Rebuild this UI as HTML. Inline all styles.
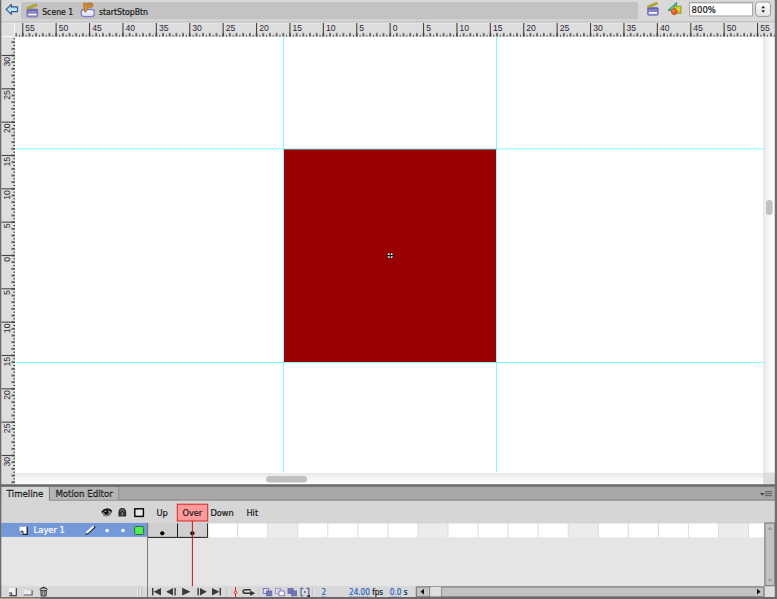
<!DOCTYPE html>
<html lang="en">
<head>
<meta charset="utf-8">
<title>startStopBtn</title>
<style>
html,body{margin:0;padding:0;background:#d6d6d6;overflow:hidden}
body{width:777px;height:599px;position:relative;font-family:"DejaVu Sans Condensed","Liberation Sans",sans-serif}
svg{position:absolute;left:0;top:0;display:block}
.mj{stroke:#454545;stroke-width:1.1}
.rl{font-family:"Liberation Sans",sans-serif;font-size:8.6px;fill:#2b2633}
.ui{font-family:"DejaVu Sans Condensed","Liberation Sans",sans-serif;font-size:8.6px;fill:#1a1a1a;stroke:#1a1a1a;stroke-width:0.22px}
.tb{font-family:"DejaVu Sans","Liberation Sans",sans-serif;font-size:8.6px;fill:#111;stroke:#111;stroke-width:0.4px}
</style>
</head>
<body>
<svg width="777" height="599" viewBox="0 0 777 599">
<defs>
  <pattern id="ht" x="2.710" y="22.8" width="6.68" height="20" patternUnits="userSpaceOnUse">
    <rect x="-0.575" y="10.3" width="1.15" height="3.5" fill="#111"/>
    <rect x="6.105" y="10.3" width="1.15" height="3.5" fill="#111"/>
    <rect x="2.89" y="12.2" width="0.9" height="1.6" fill="#161616"/>
  </pattern>
  <pattern id="vt" x="0" y="2.154" width="20" height="6.667" patternUnits="userSpaceOnUse">
    <rect y="-0.575" x="10.5" height="1.15" width="3.5" fill="#111"/>
    <rect y="6.092" x="10.5" height="1.15" width="3.5" fill="#111"/>
    <rect y="2.883" x="12.4" height="0.9" width="1.6" fill="#161616"/>
  </pattern>
  <linearGradient id="hs" x1="0" y1="0" x2="0" y2="1"><stop offset="0" stop-color="#e6e6e6"/><stop offset="0.5" stop-color="#f7f7f7"/><stop offset="1" stop-color="#fdfdfd"/></linearGradient>
  <linearGradient id="vs" x1="0" y1="0" x2="1" y2="0"><stop offset="0" stop-color="#e6e6e6"/><stop offset="0.5" stop-color="#f7f7f7"/><stop offset="1" stop-color="#fdfdfd"/></linearGradient>
  <linearGradient id="dv" x1="0" y1="0" x2="0" y2="1"><stop offset="0" stop-color="#5a5a5a"/><stop offset="0.6" stop-color="#6c6c6c"/><stop offset="1" stop-color="#9a9a9a"/></linearGradient>
  <linearGradient id="stp" x1="0" y1="0" x2="0" y2="1"><stop offset="0" stop-color="#ffffff"/><stop offset="1" stop-color="#e2e2e2"/></linearGradient>
</defs>

<!-- top bar -->
<rect x="0" y="0" width="777" height="23" fill="#d9d9d9"/>
<rect x="0" y="21" width="777" height="1.9" fill="#c5c5c5"/>
<rect x="21" y="2" width="617" height="17.5" rx="1.9" fill="#c3c3c3"/>


<!-- back arrow -->
<defs>
 <linearGradient id="ar" x1="0" y1="0" x2="0" y2="1"><stop offset="0" stop-color="#7cc6f8"/><stop offset="0.6" stop-color="#bfeaff"/><stop offset="1" stop-color="#8ccff5"/></linearGradient>
 <linearGradient id="btn" x1="0" y1="0" x2="0" y2="1"><stop offset="0" stop-color="#ffffff"/><stop offset="1" stop-color="#d6d6f2"/></linearGradient>
 <linearGradient id="clp" x1="0" y1="0" x2="0" y2="1"><stop offset="0" stop-color="#5c5cb0"/><stop offset="1" stop-color="#9494d8"/></linearGradient>
</defs>
<path d="M6.1 9.3L11.4 4.3V6.9H17.5V11.6H11.4V14.3Z" fill="url(#ar)" stroke="#33568c" stroke-width="1.1" stroke-linejoin="round"/>
<g transform="translate(26.2 3.6)">
  <rect x="0.8" y="5.6" width="10.6" height="7.6" rx="0.8" fill="url(#clp)" stroke="#6a68b8" stroke-width="0.8"/>
  <rect x="2.2" y="7.6" width="2" height="0.9" fill="#b4b4e6"/><rect x="5.1" y="7.6" width="2" height="0.9" fill="#b4b4e6"/><rect x="8" y="7.6" width="2" height="0.9" fill="#b4b4e6"/>
  <rect x="2" y="10" width="8.2" height="1.7" fill="#ffffff"/>
  <path d="M0.4 4.2L10 0.1L10.9 2.1L1.2 6.1Z" fill="#b8ad1c" stroke="#8f8a18" stroke-width="0.5"/>
</g>
<text x="42.2" y="14.5" class="ui" style="font-size:8.65px">Scene 1</text>
<!-- button symbol icon -->
<rect x="81.3" y="9.5" width="13" height="7.1" rx="2.5" fill="url(#btn)" stroke="#7e7ec6" stroke-width="1.3"/>
<path d="M83.5 3.6C83.6 2.8 85.6 2.6 86 3.4L86.6 5.6L87 3.4C87.6 2.7 92.4 2.7 92.9 3.5C93.2 4.8 93.2 6 92.6 6.9C91.6 7.7 89 7.8 87.5 7.5L86.5 11.4C86 12.5 84.6 12.6 84.3 11.6Z" fill="#cf8c34" stroke="#9c621a" stroke-width="0.5"/>
<path d="M88.4 3.2V5.4M90 3.2V5.4M91.6 3.2V5.2M84.8 4V10.8" stroke="#a96c1e" stroke-width="0.5" fill="none"/>
<path d="M85.6 4V10.4" stroke="#e8b060" stroke-width="0.5" fill="none"/>
<text x="99" y="14.5" class="ui" style="font-size:8.65px">startStopBtn</text>
<!-- right icons -->
<g transform="translate(646.8 2)">
  <rect x="0.8" y="5.6" width="10.6" height="7.6" rx="0.8" fill="url(#clp)" stroke="#6a68b8" stroke-width="0.8"/>
  <rect x="2.2" y="7.6" width="2" height="0.9" fill="#b4b4e6"/><rect x="5.1" y="7.6" width="2" height="0.9" fill="#b4b4e6"/><rect x="8" y="7.6" width="2" height="0.9" fill="#b4b4e6"/>
  <rect x="2" y="10" width="8.2" height="1.7" fill="#ffffff"/>
  <path d="M0.4 4.2L10 0.1L10.9 2.1L1.2 6.1Z" fill="#b8ad1c" stroke="#8f8a18" stroke-width="0.5"/>
</g>
<path d="M667.9 10.4L676.6 2.4V10.4Z" fill="#35c596" stroke="#1f8a6e" stroke-width="0.8" stroke-linejoin="round"/>
<path d="M670.8 9.5L675.7 5V9.5Z" fill="#66dcb2"/>
<rect x="674" y="6.2" width="7" height="7" fill="#c9c81c" stroke="#8f8f10" stroke-width="0.8"/>
<circle cx="674.3" cy="11.6" r="3.1" fill="#ea5522" stroke="#b8401a" stroke-width="0.5"/>
<circle cx="673.5" cy="10.8" r="1.5" fill="#ff8c5a" opacity="0.75"/>
<rect x="676.4" y="7.2" width="3.6" height="3.4" fill="#e2e046" opacity="0.7"/>
<!-- zoom box -->
<rect x="689.6" y="2.4" width="63" height="13.6" fill="#ffffff" stroke="#a2a2a2" stroke-width="1"/>
<rect x="690.1" y="2.9" width="62" height="1" fill="#d8d8d8"/>
<text x="691.6" y="12.9" class="ui" style="font-family:'DejaVu Sans','Liberation Sans',sans-serif;font-size:8.5px">800%</text>
<rect x="755.6" y="2.1" width="15" height="14.3" rx="3" fill="url(#stp)" stroke="#9a9a9a" stroke-width="1"/>
<path d="M761.3 8.3h3.8l-1.9-2.5zM761.3 10.2h3.8l-1.9 2.5z" fill="#222"/>

<!-- rulers -->
<rect x="1" y="22.8" width="774" height="13.6" fill="#dedede"/>
<rect x="1" y="22.8" width="774" height="0.7" fill="#e8e8e8"/>
<rect x="1" y="36.4" width="14" height="448" fill="#dedede"/>
<rect x="1" y="36.2" width="14" height="0.9" fill="#fafafa"/>
<rect x="14.1" y="22.8" width="0.9" height="14" fill="#fafafa"/>

<!-- stage -->
<rect x="15" y="36.8" width="748" height="436.4" fill="#ffffff"/>
<rect x="15.3" y="22.8" width="759.7" height="14" fill="url(#ht)" transform="translate(0 0)"/>
<g transform="translate(1 0)"><rect x="0" y="37.6" width="14" height="446" fill="url(#vt)"/></g>
<line x1="22.75" y1="23" x2="22.75" y2="36.6" class="mj"/>
<text x="25.35" y="30.8" class="rl">55</text>
<line x1="56.15" y1="23" x2="56.15" y2="36.6" class="mj"/>
<text x="58.75" y="30.8" class="rl">50</text>
<line x1="89.55" y1="23" x2="89.55" y2="36.6" class="mj"/>
<text x="92.15" y="30.8" class="rl">45</text>
<line x1="122.95" y1="23" x2="122.95" y2="36.6" class="mj"/>
<text x="125.55" y="30.8" class="rl">40</text>
<line x1="156.35" y1="23" x2="156.35" y2="36.6" class="mj"/>
<text x="158.95" y="30.8" class="rl">35</text>
<line x1="189.75" y1="23" x2="189.75" y2="36.6" class="mj"/>
<text x="192.35" y="30.8" class="rl">30</text>
<line x1="223.15" y1="23" x2="223.15" y2="36.6" class="mj"/>
<text x="225.75" y="30.8" class="rl">25</text>
<line x1="256.55" y1="23" x2="256.55" y2="36.6" class="mj"/>
<text x="259.15" y="30.8" class="rl">20</text>
<line x1="289.95" y1="23" x2="289.95" y2="36.6" class="mj"/>
<text x="292.55" y="30.8" class="rl">15</text>
<line x1="323.35" y1="23" x2="323.35" y2="36.6" class="mj"/>
<text x="325.95" y="30.8" class="rl">10</text>
<line x1="356.75" y1="23" x2="356.75" y2="36.6" class="mj"/>
<text x="359.35" y="30.8" class="rl">5</text>
<line x1="390.15" y1="23" x2="390.15" y2="36.6" class="mj"/>
<text x="392.75" y="30.8" class="rl">0</text>
<line x1="423.55" y1="23" x2="423.55" y2="36.6" class="mj"/>
<text x="426.15" y="30.8" class="rl">5</text>
<line x1="456.95" y1="23" x2="456.95" y2="36.6" class="mj"/>
<text x="459.55" y="30.8" class="rl">10</text>
<line x1="490.35" y1="23" x2="490.35" y2="36.6" class="mj"/>
<text x="492.95" y="30.8" class="rl">15</text>
<line x1="523.75" y1="23" x2="523.75" y2="36.6" class="mj"/>
<text x="526.35" y="30.8" class="rl">20</text>
<line x1="557.15" y1="23" x2="557.15" y2="36.6" class="mj"/>
<text x="559.75" y="30.8" class="rl">25</text>
<line x1="590.55" y1="23" x2="590.55" y2="36.6" class="mj"/>
<text x="593.15" y="30.8" class="rl">30</text>
<line x1="623.95" y1="23" x2="623.95" y2="36.6" class="mj"/>
<text x="626.55" y="30.8" class="rl">35</text>
<line x1="657.35" y1="23" x2="657.35" y2="36.6" class="mj"/>
<text x="659.95" y="30.8" class="rl">40</text>
<line x1="690.75" y1="23" x2="690.75" y2="36.6" class="mj"/>
<text x="693.35" y="30.8" class="rl">45</text>
<line x1="724.15" y1="23" x2="724.15" y2="36.6" class="mj"/>
<text x="726.75" y="30.8" class="rl">50</text>
<line x1="757.55" y1="23" x2="757.55" y2="36.6" class="mj"/>
<text x="760.15" y="30.8" class="rl">55</text>
<line x1="1.5" y1="55.49" x2="15" y2="55.49" class="mj"/>
<text transform="translate(9.8 56.89) rotate(-90)" text-anchor="end" class="rl">30</text>
<line x1="1.5" y1="88.83" x2="15" y2="88.83" class="mj"/>
<text transform="translate(9.8 90.23) rotate(-90)" text-anchor="end" class="rl">25</text>
<line x1="1.5" y1="122.16" x2="15" y2="122.16" class="mj"/>
<text transform="translate(9.8 123.56) rotate(-90)" text-anchor="end" class="rl">20</text>
<line x1="1.5" y1="155.50" x2="15" y2="155.50" class="mj"/>
<text transform="translate(9.8 156.90) rotate(-90)" text-anchor="end" class="rl">15</text>
<line x1="1.5" y1="188.83" x2="15" y2="188.83" class="mj"/>
<text transform="translate(9.8 190.23) rotate(-90)" text-anchor="end" class="rl">10</text>
<line x1="1.5" y1="222.16" x2="15" y2="222.16" class="mj"/>
<text transform="translate(9.8 223.56) rotate(-90)" text-anchor="end" class="rl">5</text>
<line x1="1.5" y1="255.50" x2="15" y2="255.50" class="mj"/>
<text transform="translate(9.8 256.90) rotate(-90)" text-anchor="end" class="rl">0</text>
<line x1="1.5" y1="288.83" x2="15" y2="288.83" class="mj"/>
<text transform="translate(9.8 290.23) rotate(-90)" text-anchor="end" class="rl">5</text>
<line x1="1.5" y1="322.17" x2="15" y2="322.17" class="mj"/>
<text transform="translate(9.8 323.57) rotate(-90)" text-anchor="end" class="rl">10</text>
<line x1="1.5" y1="355.50" x2="15" y2="355.50" class="mj"/>
<text transform="translate(9.8 356.90) rotate(-90)" text-anchor="end" class="rl">15</text>
<line x1="1.5" y1="388.84" x2="15" y2="388.84" class="mj"/>
<text transform="translate(9.8 390.24) rotate(-90)" text-anchor="end" class="rl">20</text>
<line x1="1.5" y1="422.17" x2="15" y2="422.17" class="mj"/>
<text transform="translate(9.8 423.57) rotate(-90)" text-anchor="end" class="rl">25</text>
<line x1="1.5" y1="455.51" x2="15" y2="455.51" class="mj"/>
<text transform="translate(9.8 456.91) rotate(-90)" text-anchor="end" class="rl">30</text>

<!-- red square + guides -->
<rect x="283.5" y="149" width="213.2" height="213.4" fill="#990000"/>
<rect x="283" y="36.8" width="1" height="435.4" fill="#7ffaff"/>
<rect x="496" y="36.8" width="1" height="435.4" fill="#7ffaff"/>
<rect x="15" y="148.4" width="748" height="1" fill="#7ffaff"/>
<rect x="15" y="362" width="748" height="1" fill="#7ffaff"/>
<!-- registration point -->
<circle cx="390.2" cy="255.6" r="2.7" fill="#e8f4f4"/>
<path d="M386.4 255.6H394M390.2 251.8V259.4" stroke="#111" stroke-width="1.1" fill="none"/>

<!-- stage scrollbars -->
<rect x="15" y="473" width="748" height="11.6" fill="url(#hs)"/>
<rect x="763" y="36.8" width="11.8" height="436.4" fill="url(#vs)"/>
<rect x="763" y="472.6" width="11.8" height="12" fill="#dcdcdc"/>
<rect x="766" y="200" width="6.6" height="15" rx="3.3" fill="#c1c1c1"/>
<rect x="266.1" y="476.1" width="41" height="6.5" rx="3.25" fill="#c1c1c1"/>

<!-- divider + tab bar -->
<rect x="0" y="499" width="777" height="24" fill="#d6d6d6"/>
<rect x="0" y="486" width="777" height="14" fill="#a8a8a8"/>
<rect x="0" y="484.35" width="777" height="2.85" fill="url(#dv)"/>
<rect x="0" y="499.6" width="777" height="1" fill="#7e7e7e"/>
<rect x="1.3" y="487" width="47.7" height="14" fill="#d6d6d6"/>
<rect x="50" y="487.3" width="68.5" height="12.4" fill="#b4b4b4"/>
<rect x="48.9" y="487" width="1" height="13.4" fill="#7c7c7c"/>
<rect x="118.3" y="487" width="0.9" height="12.8" fill="#8a8a8a"/>
<text x="6.8" y="497.1" class="ui tb" style="text-shadow:0 0.8px 0 #ececec">Timeline</text>
<text x="55.4" y="497.1" class="ui tb" style="text-shadow:0 0.8px 0 #cfcfcf">Motion Editor</text>
<path d="M760 493h4.6l-2.3 2.8z" fill="#444"/>
<path d="M765 491.6h7M765 493.6h7M765 495.6h7" stroke="#6a6a6a" stroke-width="1.1"/>

<!-- timeline header row -->
<!-- layers area -->
<rect x="0" y="522.8" width="777" height="63.6" fill="#e5e5e5"/>
<rect x="1.2" y="522.9" width="146.1" height="14" fill="#7399d8"/>
<text x="33.6" y="533.2" class="ui" style="fill:#fff;stroke:#fff;font-size:9.3px">Layer 1</text>


<!-- header icons -->
<path d="M102 512.6C103.6 509.4 108.6 508 111.6 511.8C110 515.2 105 516.4 102 512.6Z" fill="#9a9a9a" stroke="#2a2a2a" stroke-width="0.8"/>
<path d="M102 512.2C104 509 109 508 111.6 511.4" fill="none" stroke="#151515" stroke-width="1.9"/>
<circle cx="106.4" cy="512.2" r="2.2" fill="#111"/>
<circle cx="105.6" cy="511.4" r="0.6" fill="#e0e0e0"/>
<path d="M103 515.2C106 516.6 109 516 110.8 514.2" fill="none" stroke="#555" stroke-width="0.7"/>
<path d="M118.4 516.4V512.4C118.4 506.6 126.2 506.6 126.2 512.4V516.4Z" fill="#2e2e2e"/>
<path d="M120.6 511.6C120.6 509 124 509 124 511.6" fill="none" stroke="#9a9a9a" stroke-width="0.9"/>
<rect x="121.4" y="512.4" width="1.8" height="3" fill="#7a7a7a"/>
<rect x="134.8" y="508.8" width="8.6" height="7.6" fill="#e6e6e6" stroke="#000" stroke-width="1.4"/>
<!-- layer row icons -->
<path d="M19.6 526.8H27.2V534.4H22.6L19.6 531.4Z" fill="#ffffff"/>
<path d="M27.2 526.8V534.4H22.6" fill="none" stroke="#1a1a1a" stroke-width="1.3"/>
<path d="M19.8 531.2H23V534.3Z" fill="#8a8a8a"/>
<path d="M20.4 531.2H23V534" fill="none" stroke="#2a2a2a" stroke-width="0.9"/>
<path d="M85.4 534.4L86.4 531.6L93.2 525.4L95 527.2L88.2 533.6Z" fill="#ffffff"/>
<path d="M85.4 534.4L88.2 533.6L95 527.2L94 526.2" fill="none" stroke="#222" stroke-width="1.1"/>
<circle cx="107.1" cy="530.5" r="1.7" fill="#fff"/>
<circle cx="123" cy="530.5" r="1.7" fill="#fff"/>
<rect x="134.6" y="526.5" width="9" height="8" rx="0.8" fill="#4df04d" stroke="#336a48" stroke-width="1"/>

<!-- frames -->
<rect x="207.60" y="523" width="30.05" height="14.3" fill="#ffffff"/>
<line x1="207.60" y1="523" x2="207.60" y2="537.3" stroke="#dcdcdc" stroke-width="1"/>
<rect x="237.65" y="523" width="30.05" height="14.3" fill="#ffffff"/>
<line x1="237.65" y1="523" x2="237.65" y2="537.3" stroke="#dcdcdc" stroke-width="1"/>
<rect x="267.70" y="523" width="30.05" height="14.3" fill="#ececec"/>
<line x1="267.70" y1="523" x2="267.70" y2="537.3" stroke="#dcdcdc" stroke-width="1"/>
<rect x="297.75" y="523" width="30.05" height="14.3" fill="#ffffff"/>
<line x1="297.75" y1="523" x2="297.75" y2="537.3" stroke="#dcdcdc" stroke-width="1"/>
<rect x="327.80" y="523" width="30.05" height="14.3" fill="#ffffff"/>
<line x1="327.80" y1="523" x2="327.80" y2="537.3" stroke="#dcdcdc" stroke-width="1"/>
<rect x="357.85" y="523" width="30.05" height="14.3" fill="#ffffff"/>
<line x1="357.85" y1="523" x2="357.85" y2="537.3" stroke="#dcdcdc" stroke-width="1"/>
<rect x="387.90" y="523" width="30.05" height="14.3" fill="#ffffff"/>
<line x1="387.90" y1="523" x2="387.90" y2="537.3" stroke="#dcdcdc" stroke-width="1"/>
<rect x="417.95" y="523" width="30.05" height="14.3" fill="#ececec"/>
<line x1="417.95" y1="523" x2="417.95" y2="537.3" stroke="#dcdcdc" stroke-width="1"/>
<rect x="448.00" y="523" width="30.05" height="14.3" fill="#ffffff"/>
<line x1="448.00" y1="523" x2="448.00" y2="537.3" stroke="#dcdcdc" stroke-width="1"/>
<rect x="478.05" y="523" width="30.05" height="14.3" fill="#ffffff"/>
<line x1="478.05" y1="523" x2="478.05" y2="537.3" stroke="#dcdcdc" stroke-width="1"/>
<rect x="508.10" y="523" width="30.05" height="14.3" fill="#ffffff"/>
<line x1="508.10" y1="523" x2="508.10" y2="537.3" stroke="#dcdcdc" stroke-width="1"/>
<rect x="538.15" y="523" width="30.05" height="14.3" fill="#ffffff"/>
<line x1="538.15" y1="523" x2="538.15" y2="537.3" stroke="#dcdcdc" stroke-width="1"/>
<rect x="568.20" y="523" width="30.05" height="14.3" fill="#ececec"/>
<line x1="568.20" y1="523" x2="568.20" y2="537.3" stroke="#dcdcdc" stroke-width="1"/>
<rect x="598.25" y="523" width="30.05" height="14.3" fill="#ffffff"/>
<line x1="598.25" y1="523" x2="598.25" y2="537.3" stroke="#dcdcdc" stroke-width="1"/>
<rect x="628.30" y="523" width="30.05" height="14.3" fill="#ffffff"/>
<line x1="628.30" y1="523" x2="628.30" y2="537.3" stroke="#dcdcdc" stroke-width="1"/>
<rect x="658.35" y="523" width="30.05" height="14.3" fill="#ffffff"/>
<line x1="658.35" y1="523" x2="658.35" y2="537.3" stroke="#dcdcdc" stroke-width="1"/>
<rect x="688.40" y="523" width="30.05" height="14.3" fill="#ffffff"/>
<line x1="688.40" y1="523" x2="688.40" y2="537.3" stroke="#dcdcdc" stroke-width="1"/>
<rect x="718.45" y="523" width="30.05" height="14.3" fill="#ececec"/>
<line x1="718.45" y1="523" x2="718.45" y2="537.3" stroke="#dcdcdc" stroke-width="1"/>
<rect x="748.50" y="523" width="30.05" height="14.3" fill="#ffffff"/>
<line x1="748.50" y1="523" x2="748.50" y2="537.3" stroke="#dcdcdc" stroke-width="1"/>
<rect x="148" y="523" width="59.6" height="14" fill="#cfcfcf"/>
<path d="M147.6 523V537.4H207.6V523M177.5 523V537.4" stroke="#1a1a1a" stroke-width="1" fill="none"/>
<rect x="147.5" y="522.6" width="617" height="0.8" fill="#cfcfcf"/>
<circle cx="162.3" cy="533.3" r="2.1" fill="#000"/>
<circle cx="192.4" cy="533.3" r="2.1" fill="#000"/>
<!-- frame labels -->
<rect x="177.3" y="504.2" width="30.4" height="16.8" fill="#ff9a9a" stroke="#dc2424" stroke-width="1"/>
<text x="156.4" y="516.1" class="ui" style="font-size:9.2px">Up</text>
<text x="182.4" y="516.1" class="ui" style="font-size:9.2px">Over</text>
<text x="210.4" y="516.1" class="ui" style="font-size:9.2px">Down</text>
<text x="246.4" y="516.1" class="ui" style="font-size:9.2px">Hit</text>
<rect x="191.9" y="521" width="1" height="65.4" fill="#d81010"/>

<!-- vertical separator -->
<rect x="147" y="522.8" width="1" height="74.4" fill="#787878"/>

<!-- timeline bottom bar -->
<rect x="0" y="586.4" width="777" height="10.8" fill="#d8d8d8"/>
<rect x="147" y="586.4" width="1" height="10.8" fill="#787878"/>


<!-- bottom-left icons -->
<rect x="9" y="588" width="7.2" height="7.4" fill="#f2f2f2"/>
<path d="M16.3 588V595.7H9" fill="none" stroke="#3a3a3a" stroke-width="1.2"/>
<path d="M9 592.4H12.2V595.4H9Z" fill="#555"/>
<path d="M9.2 592.8L11.6 595.2H9.2Z" fill="#cfcfcf"/>
<path d="M23.8 589H27.4L28.4 590H32V594.8H23.8Z" fill="#ececec"/>
<path d="M32.1 590V595H23.8" fill="none" stroke="#5a5a5a" stroke-width="1.2"/>
<path d="M23.8 589H27.4L28.4 590H32" fill="none" stroke="#bdbdbd" stroke-width="0.6"/>
<path d="M40.8 590H46.4L46 596H41.2Z" fill="#bdbdbd" stroke="#333" stroke-width="1"/>
<ellipse cx="43.6" cy="589.4" rx="3.6" ry="1.5" fill="#c8c8c8" stroke="#222" stroke-width="1"/>
<path d="M42.4 588.2C42.6 586.8 44.6 586.8 44.8 588.2" fill="none" stroke="#222" stroke-width="1"/>
<path d="M42.6 591.4v4M44.6 591.4v4" stroke="#555" stroke-width="0.8"/>
<!-- grip -->
<path d="M137.6 587.6v8.6M140.6 587.6v8.6" stroke="#efefef" stroke-width="1"/>
<path d="M138.6 587.6v8.6M141.6 587.6v8.6" stroke="#b8b8b8" stroke-width="0.8"/>
<!-- playback -->
<g fill="#3a3a3a">
<rect x="152" y="588" width="1.4" height="7.4"/><path d="M161 588v7.4l-7.4-3.7z"/>
<path d="M173 588v7.4l-6.8-3.7z"/><rect x="174.4" y="588" width="1.4" height="7.4"/>
<path d="M182.2 587.8v7.8l8.2-3.9z"/>
<rect x="197.4" y="588" width="1.4" height="7.4"/><path d="M200 588v7.4l6.8-3.7z"/>
<path d="M212 588v7.4l7.4-3.7z"/><rect x="219.6" y="588" width="1.4" height="7.4"/>
</g>
<path d="M227.2 587.4v9M259.2 587.4v9M312.4 587.4v9" stroke="#b4b4b4" stroke-width="0.9"/>
<path d="M228 587.4v9M260 587.4v9M313.2 587.4v9" stroke="#ececec" stroke-width="0.8"/>
<path d="M235.5 587.2V597" stroke="#ee1111" stroke-width="1"/>
<circle cx="235.5" cy="592.3" r="1.3" fill="#fff" stroke="#ee1111" stroke-width="0.9"/>
<path d="M250.8 589.7H245.4C242.3 589.7 242.3 593.3 245.4 593.3H251" fill="none" stroke="#333" stroke-width="1.5"/>
<path d="M250.2 590.6L255.2 593.3L250.2 596Z" fill="#333"/>
<!-- onion icons -->
<g stroke="#6464aa" stroke-width="0.8">
<rect x="263.2" y="588.6" width="5.2" height="4.8" fill="#dcdcf4"/><rect x="266.6" y="591" width="5.2" height="4.8" fill="#7474b8"/>
<rect x="275.6" y="588.6" width="5.2" height="4.8" fill="#dcdcf4" stroke="#8a8ac8"/><rect x="279" y="591" width="5.2" height="4.8" fill="#ffffff"/>
<rect x="288" y="588.6" width="5.2" height="4.8" fill="#7474b8"/><rect x="291.4" y="591" width="5.2" height="4.8" fill="#7474b8"/>
</g>
<path d="M303.2 588.4H301V595.8H303.2M306.6 588.4H308.8V595.8H306.6" fill="none" stroke="#55558f" stroke-width="1.1"/>
<circle cx="304.9" cy="592" r="0.9" fill="#55558f"/>
<path d="M309.8 594.4v2.6h-2.6z" fill="#111"/>
<text x="321.6" y="595" class="ui" style="fill:#2a6ac4;stroke:#2a6ac4;font-size:8.1px">2</text>
<text x="349" y="595" class="ui" style="font-size:8.1px"><tspan fill="#2a6ac4" stroke="#2a6ac4">24.00</tspan> fps</text>
<text x="389.8" y="595" class="ui" style="font-size:8.1px"><tspan fill="#2a6ac4" stroke="#2a6ac4">0.0</tspan> s</text>
<path d="M321.4 596.8h5M349 596.8h21M389.8 596.8h12" stroke="#4a85d0" stroke-width="1" stroke-dasharray="1 1"/>

<!-- h scrollbar -->
<rect x="416.4" y="586.9" width="347.6" height="9.9" fill="#c3c3c3" stroke="#818181" stroke-width="1.3"/>
<rect x="429.3" y="586.1" width="1" height="10.9" fill="#777"/>
<rect x="430.2" y="586.9" width="11" height="9.4" fill="#dedede"/>
<rect x="441.2" y="586.4" width="0.9" height="10.4" fill="#888"/>
<path d="M424 588.8v5.8l-3.6-2.9z" fill="#111"/>
<path d="M757 588.8v5.8l3.6-2.9z" fill="#111"/>
<!-- v scrollbar -->
<rect x="764.9" y="523" width="9.9" height="62.6" fill="#c3c3c3" stroke="#838383" stroke-width="1.3"/>
<path d="M767 530h5.8l-2.9-3.4z" fill="#a2a2a2"/>
<path d="M767 578.8h5.8l-2.9 3.4z" fill="#a2a2a2"/>
<rect x="765.4" y="586.8" width="9.6" height="10" fill="#dedede"/>

<!-- window borders -->
<rect x="0" y="0" width="1.3" height="599" fill="#6a6a6a"/>
<rect x="774.8" y="0" width="2.2" height="599" fill="#6e6e6e"/>
<rect x="0" y="597" width="777" height="2" fill="#6a6a6a"/>
<rect x="0" y="597.8" width="40" height="1.2" fill="#a8a480"/>
</svg>
</body>
</html>
